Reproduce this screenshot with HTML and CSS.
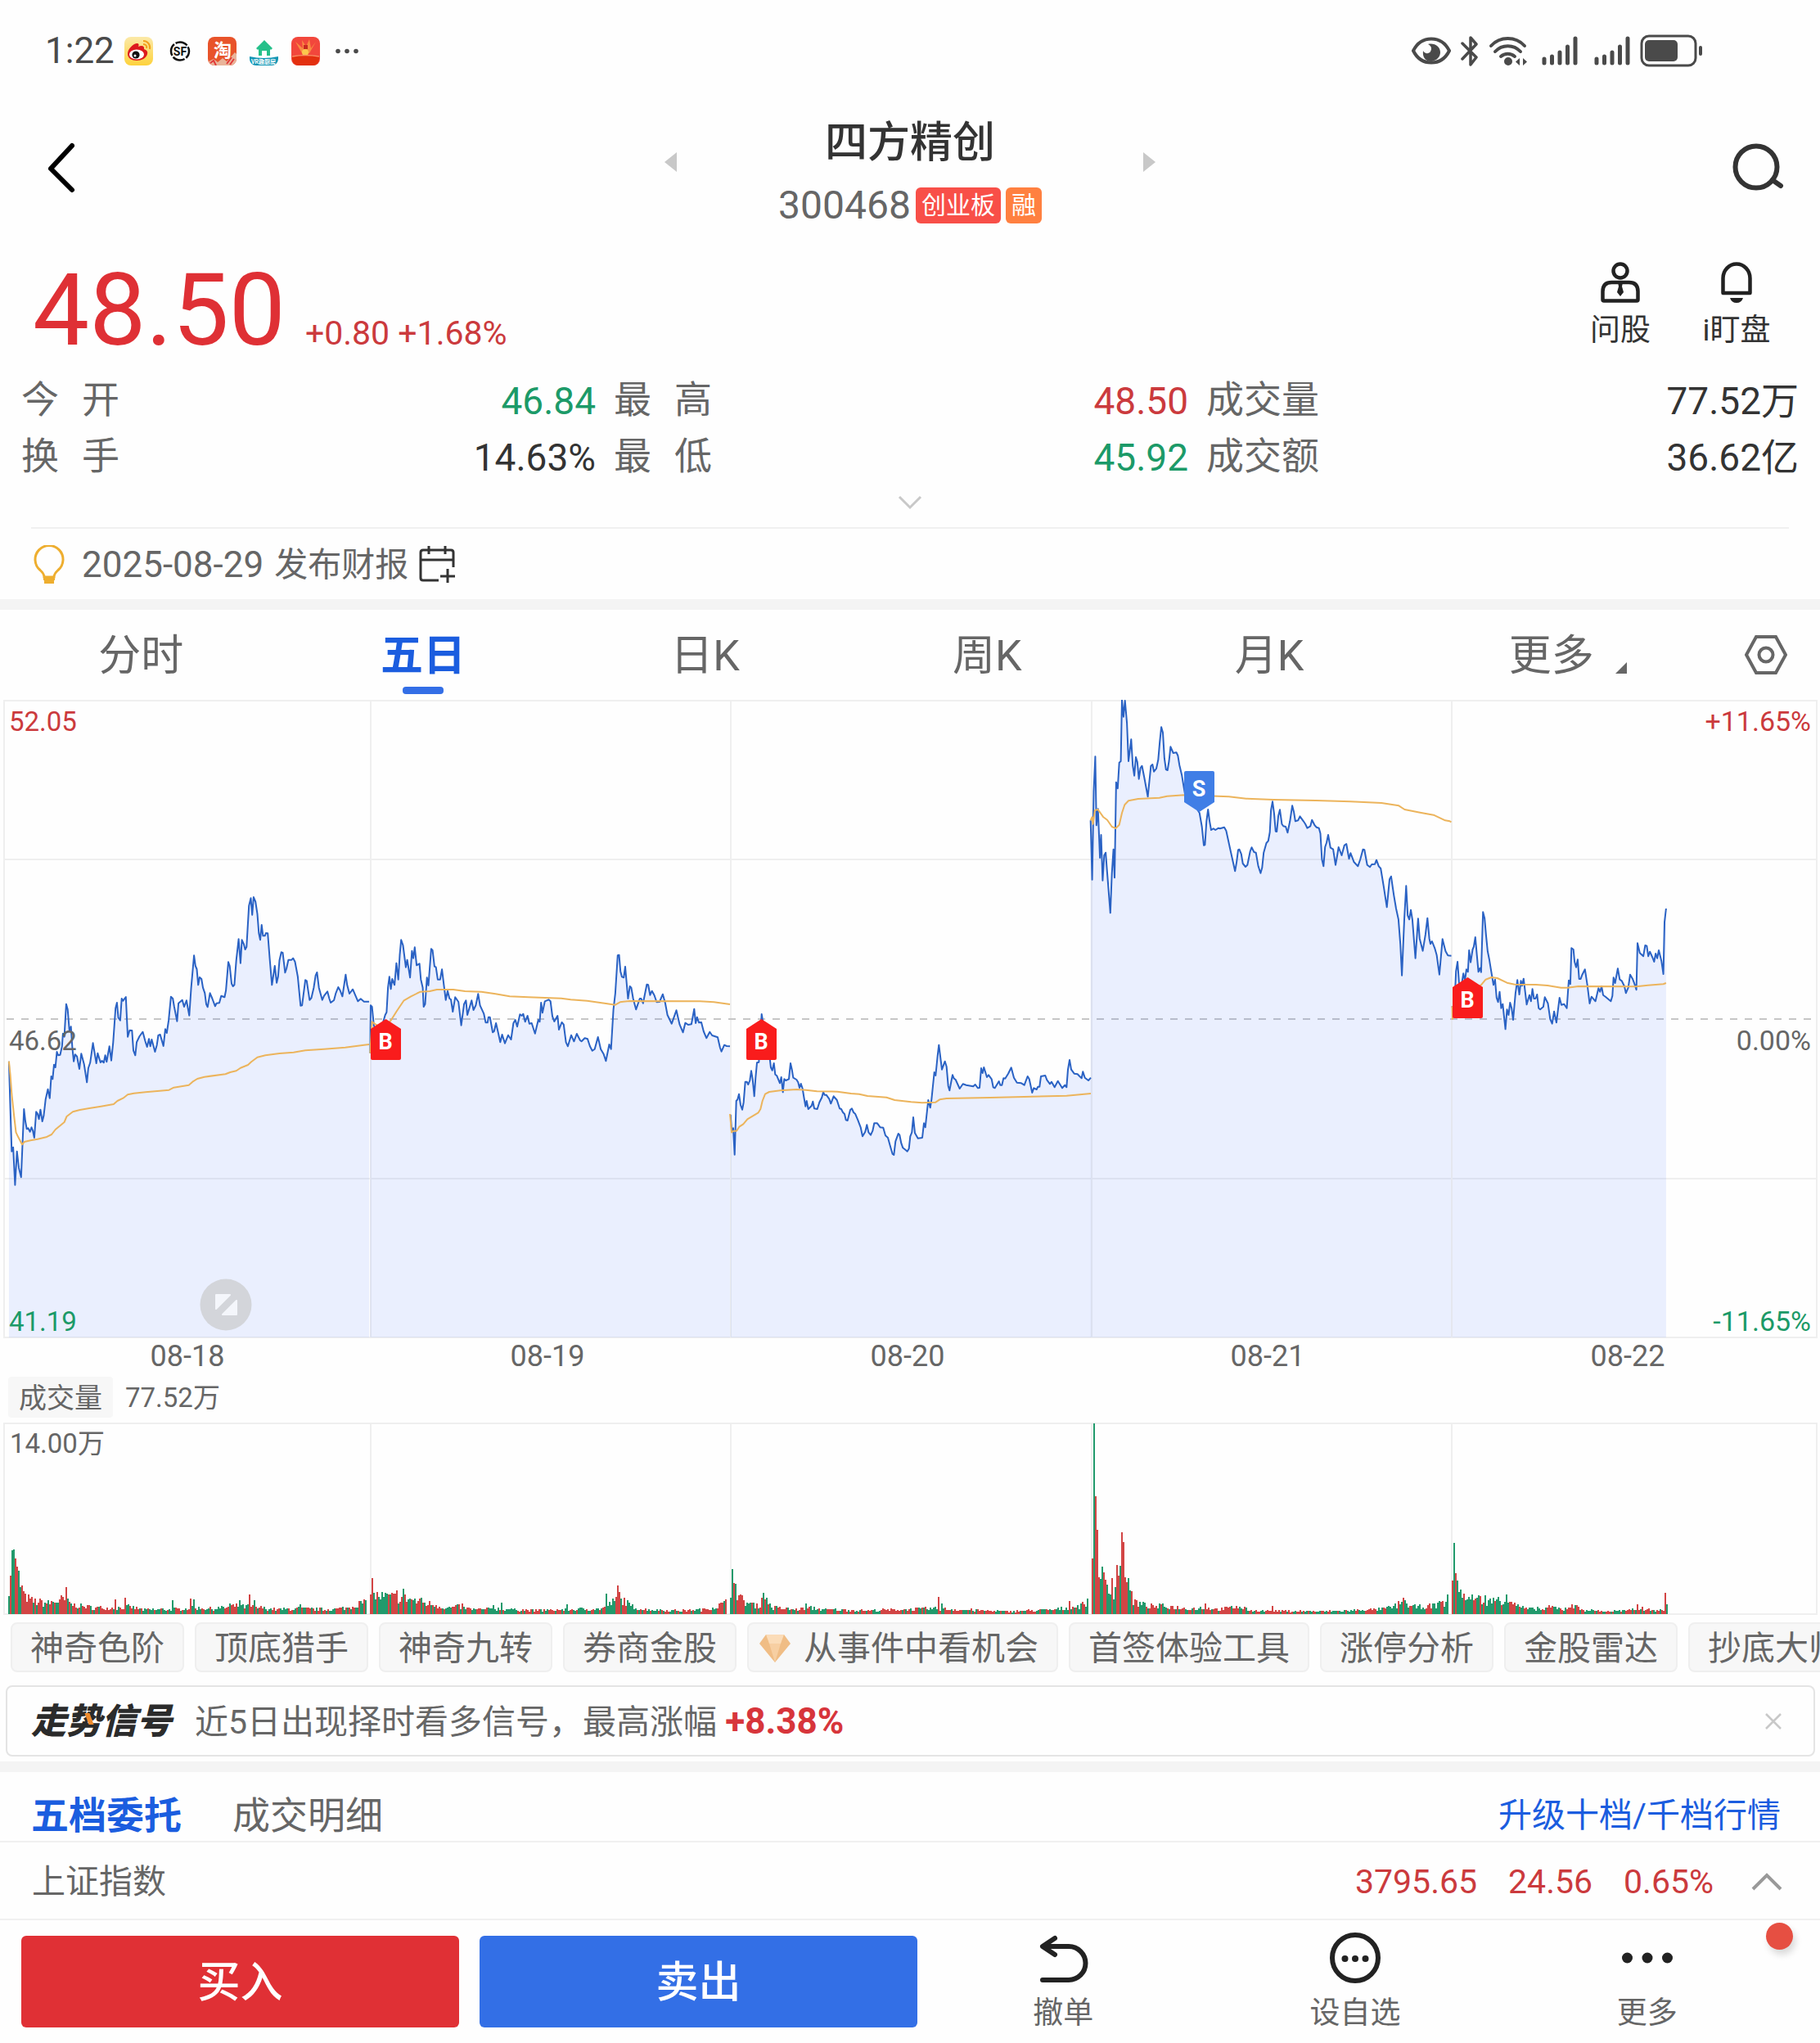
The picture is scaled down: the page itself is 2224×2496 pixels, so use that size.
FILE: index.html
```html
<!DOCTYPE html>
<html lang="zh-CN">
<head>
    <meta charset="UTF-8">
    <meta name="viewport" content="width=device-width, initial-scale=1.0">
    <title>四方精创 300468</title>
    <link rel="stylesheet" href="styles.css">
</head>
<body>

    <div class="statusbar">
        <span class="clock">1:22</span>
        <div class="apps">
            <svg width="35" height="35" viewBox="0 0 35 35">
                <defs><linearGradient id="wb" x1="0" y1="0" x2="0" y2="1"><stop offset="0" stop-color="#fbe9a8"/><stop offset="1" stop-color="#fdd23c"/></linearGradient></defs>
                <rect width="35" height="35" rx="8" fill="url(#wb)"/>
                <path d="M4 21C4 15 10 9 15 8c3 0 3 2 2 4 4-2 8-1 7 3 3 1 5 3 4 6-1 5-7 8-13 8S4 26 4 21z" fill="#dd1a1d"/>
                <ellipse cx="15" cy="21.500" rx="9" ry="6" fill="#fff"/>
                <circle cx="14" cy="22" r="4.600" fill="#111"/><circle cx="13" cy="23" r="1.500" fill="#fff"/>
                <path d="M23 5c5 0 9 4 8 10M23 9c3 0 5 2 4 5" fill="none" stroke="#f2a01c" stroke-width="2"/>
            </svg>
            <svg width="35" height="35" viewBox="0 0 35 35">
                <circle cx="17" cy="17.500" r="11" fill="none" stroke="#111" stroke-width="2.500" stroke-dasharray="15.300 2" stroke-dashoffset="6"/>
                <text x="17" y="22.500" class="sf">SF</text>
            </svg>
            <svg width="35" height="35" viewBox="0 0 35 35">
                <rect width="35" height="35" rx="8" fill="#e8532a"/>
                <text x="18" y="24" class="tao">淘</text>
                <path d="M1 30l6-3 5 4 6-5 5 4 10-11 2 2v6a8 8 0 0 1-8 8H8a8 8 0 0 1-7-5z" fill="#e9b49a"/>
                <path d="M3 32l4-3 3 6M23 33l6-8M27 34l5-7" stroke="#e23a3a" stroke-width="2" fill="none"/>
            </svg>
            <svg width="35" height="35" viewBox="0 0 35 35">
                <path d="M18 4l10 10-2 2-1-1v8h-4v-6h-6v6h-4v-8l-1 1-2-2z" fill="#25c08a"/>
                <path d="M0 24q17 4 35 0v3a8 8 0 0 1-8 8H8a8 8 0 0 1-8-8z" fill="#0f95b4"/>
                <text x="17" y="33" class="vr">VR趣厨房</text>
            </svg>
            <svg width="35" height="35" viewBox="0 0 35 35">
                <rect width="35" height="35" rx="8" fill="#f2473c"/>
                <path d="M5 6l8 14h9l8-14-6 8-2-11-4 9-5-8 1 10z" fill="#f98d43"/>
                <circle cx="17" cy="19" r="4" fill="#fbc74d"/><rect x="15" y="10" width="5" height="5" fill="#c92a20"/>
                <path d="M1 24q16-3 33 0v3a8 8 0 0 1-8 8H9a8 8 0 0 1-8-8z" fill="#e3300f"/>
                <path d="M1 24q16-3 33 0" stroke="#f98d63" stroke-width="1.500" fill="none"/>
            </svg>
            <svg width="35" height="35" viewBox="0 0 35 35" fill="#4a4a4a">
                <circle cx="6" cy="17.500" r="2.800"/><circle cx="17" cy="17.500" r="2.800"/><circle cx="28" cy="17.500" r="2.800"/>
            </svg>
        </div>
        <div class="system">
            <svg width="48" height="40" viewBox="0 0 48 40">
                <path d="M2 20C7 10 15 5.500 24 5.500S41 10 46 20C41 30 33 34.500 24 34.500S7 30 2 20z" fill="none" stroke="#4a4a4a" stroke-width="4"/>
                <path d="M20 12c8-2 15 3 15 10 0 5-4 10-11 11-7 0-11-5-10-13 2 4 7 4 9 1 2-4 1-7-3-9z" fill="#4a4a4a"/>
            </svg>
            <svg width="22" height="40" viewBox="0 0 22 40" fill="none" stroke="#4a4a4a" stroke-width="3.500" stroke-linejoin="round" stroke-linecap="round">
                <path d="M2 11l17 17-7 9V4l7 8L2 30"/>
            </svg>
            <svg width="48" height="40" viewBox="0 0 48 40" fill="none" stroke="#4a4a4a" stroke-width="4" stroke-linecap="round">
                <path d="M3 14a28 28 0 0 1 41 0M8 21a21 21 0 0 1 31 0M15 27a13 13 0 0 1 17 0"/>
                <circle cx="24" cy="33" r="3" fill="#4a4a4a"/>
                <path d="M38 29v9l-5-4.500zM42 29v9l5-4.500z" fill="#4a4a4a" stroke="none"/>
            </svg>
            <svg class="signal" width="44" height="40" viewBox="0 0 44 40" stroke="#4a4a4a" stroke-width="5" stroke-linecap="round">
                <path d="M3 30v5M12.500 27v8M22 22v13M31.500 15v20M41 5v30"/>
            </svg>
            <svg class="signal" width="44" height="40" viewBox="0 0 44 40" stroke="#4a4a4a" stroke-width="5" stroke-linecap="round">
                <path d="M3 30v5M12.500 27v8M22 22v13M31.500 15v20M41 5v30"/>
            </svg>
            <svg width="78" height="40" viewBox="0 0 78 40">
                <rect x="2" y="2" width="66" height="36" rx="9" fill="none" stroke="#4a4a4a" stroke-width="3"/>
                <rect x="6" y="7" width="40" height="26" rx="5" fill="#4a4a4a"/>
                <rect x="72" y="14" width="4" height="12" rx="2" fill="#4a4a4a"/>
            </svg>
        </div>
    </div>

    <header class="header">
        <button class="icon-btn back" aria-label="返回">
            <svg width="40" height="64" viewBox="0 0 40 64"><path d="M33 5L7 33l26 26" fill="none" stroke="#000" stroke-width="6" stroke-linecap="round" stroke-linejoin="round"/></svg>
        </button>
        <div class="stock">
            <button class="icon-btn" aria-label="上一只">
                <svg width="16" height="26" viewBox="0 0 16 26"><path d="M16 1v24L1 13z" fill="#c8c8c8"/></svg>
            </button>
            <div class="stock-name">
                <h1>四方精创</h1>
                <p>300468 <span class="tag">创业板</span><span class="tag tag-orange">融</span></p>
            </div>
            <button class="icon-btn" aria-label="下一只">
                <svg width="16" height="26" viewBox="0 0 16 26"><path d="M0 1v24l15-12z" fill="#c8c8c8"/></svg>
            </button>
        </div>
        <button class="icon-btn search" aria-label="搜索">
            <svg width="66" height="62" viewBox="0 0 66 62" fill="none" stroke="#333" stroke-width="6" stroke-linecap="round"><circle cx="30" cy="30" r="25.500"/><path d="M50 46l10 7"/></svg>
        </button>
    </header>

    <section class="quote">
        <div class="price">
            <strong>48.50</strong>
            <span>+0.80 +1.68%</span>
        </div>
        <div class="actions">
            <button>
                <svg width="50" height="50" viewBox="0 0 50 50" fill="none" stroke="#222" stroke-width="4.500">
                    <circle cx="25" cy="11" r="8.500"/>
                    <path d="M3.500 46V36q0-11 11-11h21q11 0 11 11v10q0 1.500-1.500 1.500H5q-1.500 0-1.500-1.500z"/>
                    <path d="M22 25h6l-1 5 2 7-4 5-4-5 2-7z" fill="#222" stroke="none"/>
                </svg>
                问股
            </button>
            <button>
                <svg width="50" height="50" viewBox="0 0 50 50" fill="none" stroke="#222" stroke-width="4.500">
                    <path d="M8.500 38V20a16.500 17.500 0 0 1 33 0v18z" stroke-linejoin="round"/>
                    <path d="M17 44h16q-2 6-8 6t-8-6z" fill="#222" stroke="none"/>
                </svg>
                i盯盘
            </button>
        </div>
    </section>

    <dl class="stats">
        <div><dt><span>今</span><span>开</span></dt><dd class="green">46.84</dd></div>
        <div><dt><span>最</span><span>高</span></dt><dd class="red">48.50</dd></div>
        <div><dt>成交量</dt><dd>77.52万</dd></div>
        <div><dt><span>换</span><span>手</span></dt><dd>14.63%</dd></div>
        <div><dt><span>最</span><span>低</span></dt><dd class="green">45.92</dd></div>
        <div><dt>成交额</dt><dd>36.62亿</dd></div>
    </dl>
    <button class="expand" aria-label="展开">
        <svg width="32" height="20" viewBox="0 0 32 20"><path d="M3 3l13 13L29 3" fill="none" stroke="#c8c8c8" stroke-width="3"/></svg>
    </button>

    <div class="notice">
        <svg width="42" height="48" viewBox="0 0 42 48" fill="none" stroke="#eeae2f" stroke-width="3">
            <path d="M16 39q0-4-5-8.500a17 17 0 1 1 22 0q-5 4.500-5 8.500z"/><path d="M15 41h14M16 45h12" stroke-width="4"/>
        </svg>
        <span class="notice-date">2025-08-29</span>
        <span>发布财报</span>
        <svg width="44" height="46" viewBox="0 0 44 46" fill="none" stroke="#333" stroke-width="3">
            <path d="M24 42H5q-3 0-3-3V8q0-3 3-3h34q3 0 3 3v18M2 17h40M12 0v10M32 0v10M35 28v17M26 37h18"/>
        </svg>
    </div>

    <nav class="tabs">
        <button>分时</button>
        <button class="active">五日</button>
        <button>日K</button>
        <button>周K</button>
        <button>月K</button>
        <button class="more">更多</button>
        <button class="settings" aria-label="设置">
            <svg width="52" height="50" viewBox="0 0 52 50" fill="none" stroke="#666" stroke-width="4"><path d="M14 3h24l12 22-12 22H14L2 25z"/><circle cx="26" cy="25" r="8.500"/></svg>
        </button>
    </nav>

    <svg class="chart" viewBox="0 0 2224 780">
        <g class="grid">
            <path d="M5 1H2220V779H5zM5 195H2220M5 585H2220M453 0V780M893 0V780M1334 0V780M1774 0V780"/>
        </g>
        <path class="dash" d="M8 390H2216"/>
        <g id="series"></g>
        <text x="11" y="38" class="red">52.05</text>
        <text x="11" y="428">46.62</text>
        <text x="11" y="771" class="green">41.19</text>
        <text x="2213" y="38" class="red end">+11.65%</text>
        <text x="2213" y="428" class="end">0.00%</text>
        <text x="2213" y="771" class="green end">-11.65%</text>
        <g id="markers"></g>
        <circle cx="276" cy="739" r="31.500" fill="#d3d5da"/>
        <path d="M264 727h17l-17 17zM289 751h-17l17-17z" fill="#f4f6fb" stroke="#f4f6fb" stroke-width="2" stroke-linejoin="round"/>
    </svg>
    <div class="dates"><span>08-18</span><span>08-19</span><span>08-20</span><span>08-21</span><span>08-22</span></div>

    <div class="volume-head"><button>成交量</button><span>77.52万</span></div>
    <svg class="chart" viewBox="0 0 2224 235">
        <path class="grid" d="M5 1H2220V234H5zM453 0V235M893 0V235M1334 0V235M1774 0V235"/>
        <path id="vol-red" class="bar-red"/>
        <path id="vol-green" class="bar-green"/>
        <text x="12" y="37">14.00万</text>
    </svg>

    <div class="chips">
        <button>神奇色阶</button>
        <button>顶底猎手</button>
        <button>神奇九转</button>
        <button>券商金股</button>
        <button class="gem">
            <svg width="38" height="34" viewBox="0 0 38 34">
                <path d="M8 0h22l8 11-19 23L0 11z" fill="#f0bd85"/><path d="M8 0h22l-4 11H12z" fill="#fbdcb8"/><path d="M12 11h14l-7 23z" fill="#f7cfa2"/>
            </svg>从事件中看机会
        </button>
        <button>首签体验工具</button>
        <button>涨停分析</button>
        <button>金股雷达</button>
        <button>抄底大师</button>
    </div>

    <div class="signal-card">
        <span class="signal-logo">走势信号</span>
        <p>近5日出现择时看多信号，最高涨幅 <b>+8.38%</b></p>
        <button class="icon-btn" aria-label="关闭">
            <svg width="20" height="20" viewBox="0 0 20 20"><path d="M1 1l18 18M19 1L1 19" stroke="#c8c8c8" stroke-width="2.500"/></svg>
        </button>
    </div>

    <div class="orders">
        <button class="active">五档委托</button>
        <button>成交明细</button>
        <a href="#">升级十档/千档行情</a>
    </div>

    <div class="index-row">
        <span class="index-name">上证指数</span>
        <span class="red">3795.65</span>
        <span class="red">24.56</span>
        <span class="red">0.65%</span>
        <button class="icon-btn" aria-label="收起">
            <svg width="38" height="22" viewBox="0 0 38 22"><path d="M2 20L19 3l17 17" fill="none" stroke="#999" stroke-width="4"/></svg>
        </button>
    </div>

    <footer class="bottom">
        <div class="trade">
            <button class="buy">买入</button>
            <button class="sell">卖出</button>
        </div>
        <div class="tools">
            <button>
                <svg width="62" height="62" viewBox="0 0 62 62" fill="none" stroke="#222" stroke-width="6" stroke-linecap="round" stroke-linejoin="round"><path d="M21 7L6 17l15 10M7 17h31a20 20 0 0 1 0 41H6"/></svg>
                撤单
            </button>
            <button>
                <svg width="62" height="62" viewBox="0 0 62 62"><circle cx="31" cy="31" r="28" fill="none" stroke="#222" stroke-width="6"/><g fill="#222"><circle cx="18.500" cy="32" r="4"/><circle cx="31" cy="32" r="4"/><circle cx="43.500" cy="32" r="4"/></g></svg>
                设自选
            </button>
            <button class="has-dot">
                <svg width="62" height="62" viewBox="0 0 62 62" fill="#222"><circle cx="6.500" cy="31" r="6.500"/><circle cx="31" cy="31" r="6.500"/><circle cx="55.500" cy="31" r="6.500"/></svg>
                更多
            </button>
        </div>
    </footer>

    <script src="script.js"></script>
</body>
</html>
```

FILE: styles.css
```css
* { box-sizing: border-box; }

body {
    margin: 0;
    background: #fefefe;
    color: #666;
    font-family: Roboto, "Noto Sans CJK SC", sans-serif;
    font-size: 41px;
    line-height: 44px;
    overflow-x: hidden;
}

h1, p, dl, dd { margin: 0; }
svg { display: block; flex: none; }

button {
    margin: 0;
    padding: 0;
    border: 0;
    background: none;
    color: inherit;
    font: inherit;
    white-space: nowrap;
}

.red { color: #cb3a3d; fill: #cb3a3d; }
.green { color: #1c9a68; fill: #1c9a68; }

/* status bar */
.statusbar {
    display: flex;
    align-items: center;
    height: 124px;
    padding: 0 142px 0 55px;
    color: #4a4a4a;
}
.clock { font-size: 44px; width: 97px; }
.apps { display: flex; gap: 16px; }
.system { display: flex; align-items: center; gap: 12px; margin-left: auto; }
.system .signal { margin-left: 5px; }
.system .signal + .signal { margin-left: 8px; }
.sf { font: bold 14px Roboto, sans-serif; text-anchor: middle; fill: #111; }
.tao { font: bold 22px "Noto Sans CJK SC", sans-serif; text-anchor: middle; fill: #fff; }
.vr { font: bold 7px "Noto Sans CJK SC", sans-serif; text-anchor: middle; fill: #fff; }

/* title */
.header {
    display: grid;
    grid-template-columns: 1fr auto 1fr;
    align-items: center;
    padding: 14px 42px 11px;
}
.back { justify-self: start; padding: 0 0 2px 13px; }
.search { justify-self: end; padding-bottom: 2px; }
.stock { display: flex; align-items: center; width: 602px; justify-content: space-between; }
.stock > .icon-btn { padding-bottom: 15px; }
.stock-name { text-align: center; }
.stock-name h1 { font-size: 52px; font-weight: 500; line-height: 74px; color: #333; }
.stock-name p { display: flex; justify-content: center; font-size: 48px; margin-top: 17px; }
.tag {
    margin-left: 6px;
    padding: 0 7px;
    border-radius: 6px;
    background: #f84f48;
    color: #fff;
    font-size: 30px;
}
.tag-orange { background: #ff8040; }

/* price */
.quote { display: flex; justify-content: space-between; padding: 36px 57px 0 40px; }
.price { display: flex; align-items: baseline; gap: 24px; height: 120px; }
.price strong { font-size: 123px; font-weight: 400; line-height: 118px; color: #df3035; }
.price span { font-size: 41px; color: #cb3a3d; }
.actions { display: flex; align-items: flex-start; gap: 52px; font-size: 37px; color: #333; }
.actions button { display: flex; flex-direction: column; align-items: center; gap: 12px; min-width: 90px; }

.stats {
    display: grid;
    grid-template-columns: repeat(3, 1fr);
    padding: 14px 26px 0;
    font-size: 46px;
    line-height: 69px;
}
.stats div { display: flex; justify-content: space-between; height: 69px; padding-right: 22px; }
.stats div:nth-child(3n) { padding-right: 0; }
.stats dt { display: flex; gap: 28px; }
.stats dd { padding-top: 2px; color: #333; }
.stats dd.red { color: #cb3a3d; }
.stats dd.green { color: #1c9a68; }

.expand { display: flex; width: 100%; height: 44px; align-items: center; justify-content: center; margin-bottom: 8px; }

.notice {
    display: flex;
    align-items: center;
    gap: 13px;
    height: 88px;
    margin: 0 38px;
    padding-top: 2px;
    border-top: 2px solid #f0f0f0;
}
.notice svg:first-child { margin-right: 7px; }
.notice-date { font-size: 44px; }

/* chart tabs */
.tabs {
    display: flex;
    height: 123px;
    border-top: 13px solid #f4f4f4;
    font-size: 52px;
}
.tabs button { position: relative; flex: 1; padding-top: 3px; }
.tabs .active { color: #1b5ddf; font-weight: 700; }
.tabs .active::after {
    content: "";
    position: absolute;
    bottom: 7px;
    left: 50%;
    width: 50px;
    height: 9px;
    margin-left: -25px;
    border-radius: 4px;
    background: #336ee6;
}
.tabs .more::after {
    content: "";
    position: absolute;
    right: 80px;
    bottom: 32px;
    border-left: 14px solid transparent;
    border-bottom: 14px solid #666;
}
.tabs .settings { flex: 0 0 156px; padding: 0 0 0 64px; }

.chart { width: 100%; height: auto; }
.chart text { font-size: 33px; fill: #666; }
.chart text.red { fill: #cb3a3d; }
.chart text.green { fill: #1c9a68; }
.chart .end { text-anchor: end; font-size: 34px; }
.grid { fill: none; stroke: #efefef; stroke-width: 2; }
.dash { fill: none; stroke: #c6c6c6; stroke-width: 2; stroke-dasharray: 9 9; }
.area { fill: #3c70ff; fill-opacity: 0.1; }
.line, .avg { fill: none; stroke: #2a62c4; stroke-width: 2; stroke-linejoin: round; vector-effect: non-scaling-stroke; }
.avg { stroke: #ecb45c; }
.chart .marker { font-size: 27px; font-weight: 700; fill: #fff; text-anchor: middle; }
.bar-red { fill: none; stroke: #d24545; stroke-width: 2; }
.bar-green { fill: none; stroke: #229a6c; stroke-width: 2; }

.dates { display: grid; grid-template-columns: repeat(5, 1fr); padding: 0 15px 0 9px; font-size: 36px; text-align: center; }

.volume-head { display: flex; align-items: center; gap: 15px; padding: 3px 10px 6px; font-size: 34px; }
.volume-head button { height: 50px; padding: 2px 13px 0; border-radius: 4px; background: #f7f7f7; }
.volume-head span { padding-top: 2px; font-size: 33px; }

/* tool chips */
.chips { display: flex; gap: 13px; padding: 9px 0 16px 13px; overflow: hidden; }
.chips button {
    flex: none;
    height: 61px;
    padding: 3px 22px 0;
    border: 2px solid #efefef;
    border-radius: 8px;
    background: #f7f7f7;
}
.chips .gem { display: flex; align-items: center; gap: 16px; padding-left: 13px; }

.signal-card {
    display: flex;
    align-items: center;
    height: 87px;
    margin: 0 6px 6px 7px;
    padding: 0 39px 0 29px;
    border: 2px solid #e4e4e4;
    border-radius: 8px;
}
.signal-logo {
    position: relative;
    margin-right: 28px;
    color: #2b2b2b;
    font-size: 43px;
    font-style: italic;
    font-weight: 900;
}
.signal-logo::after {
    content: "";
    position: absolute;
    left: 68px;
    top: 12px;
    width: 6px;
    height: 14px;
    background: #ee8a2c;
    transform: skewX(20deg);
}
.signal-card p { padding-top: 2px; }
.signal-card b { color: #d7353b; font-size: 44px; }
.signal-card .icon-btn { margin-left: auto; }

/* order book */
.orders {
    display: flex;
    align-items: center;
    gap: 62px;
    height: 99px;
    padding: 22px 48px 0 38px;
    border-top: 13px solid #f4f4f4;
    border-bottom: 2px solid #f0f0f0;
    font-size: 46px;
}
.orders .active { color: #1b5ddf; font-weight: 700; }
.orders a { margin-left: auto; color: #1b5ddf; font-size: 41px; text-decoration: none; }

.index-row {
    display: flex;
    align-items: center;
    gap: 38px;
    height: 95px;
    padding: 2px 46px 0 39px;
    border-bottom: 2px solid #f0f0f0;
}
.index-name { margin-right: auto; }
.index-row .icon-btn { margin-left: 8px; }

.bottom { display: flex; padding: 15px 33px 0 26px; }
.trade { display: flex; flex: 1; gap: 25px; padding-top: 4px; }
.trade button { flex: 1; height: 112px; padding-top: 3px; border-radius: 6px; color: #fff; font-size: 52px; font-weight: 500; }
.buy { background: #e03035; }
.sell { background: #336fe6; }
.tools { display: flex; flex: 0 0 1070px; font-size: 37px; }
.tools button { position: relative; flex: 1; display: flex; flex-direction: column; align-items: center; gap: 15px; }
.has-dot::after {
    content: "";
    position: absolute;
    top: -12px;
    right: 0;
    width: 33px;
    height: 33px;
    border-radius: 50%;
    background: #e64f42;
    box-shadow: 3px 6px 8px rgba(0, 0, 0, 0.15);
}
```

FILE: script.js
```js
// Each block: [offset x, offset y, step x, step y, price points, average points]
const days = [
    [0, 205, 900 / 1568, 1 / 3,
     "19,710 25,1040 28,1025 32,1163 36,1040 40,1100 45,1135 51,885 54,930 57,958 60,955 64,968 67,952 70,965 73,990 77,895 80,902 83,922 86,887 90,930 93,910 97,850 102,812 106,845 109,765 112,775 115,722 118,732 121,675 124,688 128,686 132,655 134,608 137,620 141,500 144,520 148,600 151,583 154,660 157,710 160,685 164,692 169,738 173,682 179,720 185,787 188,735 192,715 198,643 205,717 208,680 214,714 217,708 221,715 224,688 227,712 233,655 237,707 241,640 246,515 249,495 252,550 256,560 259,480 262,488 268,474 272,620 276,596 281,597 284,670 288,688 291,640 297,618 304,602 309,635 313,657 317,628 320,655 323,630 330,675 334,650 337,615 341,612 348,654 352,592 355,606 359,560 364,473 368,480 371,510 377,563 380,497 388,485 392,510 397,487 403,542 407,440 413,322 416,360 419,372 422,430 425,402 429,408 432,440 436,460 439,500 442,511 447,460 452,480 458,508 461,497 467,496 471,470 478,475 481,450 486,346 489,360 493,425 496,435 499,430 503,340 508,262 512,350 515,265 519,280 522,300 525,290 530,140 534,112 537,173 540,108 544,125 548,170 551,240 554,265 557,210 560,250 564,250 566,240 570,241 574,330 579,430 585,360 589,422 592,400 595,340 599,310 602,312 607,385 610,370 614,338 621,338 624,332 628,345 634,400 640,506 643,505 650,412 653,415 659,485 663,478 668,440 672,395 675,384 679,440 686,485 690,470 697,454 701,480 704,495 711,486 715,460 720,438 724,450 729,472 736,392 739,430 744,462 751,446 757,470 762,490 768,481 775,491 786,491",
     "19,710 22,760 25,830 30,910 34,970 38,985 47,1015 52,1005 65,1000 80,995 98,988 110,978 118,960 137,933 142,912 155,895 170,888 190,882 215,875 242,867 250,855 262,845 272,832 285,827 310,823 360,815 370,806 402,797 410,785 420,774 435,767 480,757 490,750 503,745 512,734 528,723 535,712 548,695 565,688 595,681 625,677 650,670 690,665 735,659 775,650 786,648"],
    [0, 205, 900 / 1568, 1 / 3,
     "788,680 789,505 792,510 796,580 805,600 815,570 820,540 823,530 826,440 829,400 832,445 835,408 840,430 844,350 848,410 851,320 854,265 858,285 864,365 867,338 873,403 877,305 880,332 883,292 887,358 893,352 896,410 900,440 902,510 905,500 909,403 912,432 918,298 921,303 925,362 928,365 932,410 937,410 941,373 945,430 949,485 953,452 957,480 960,483 964,528 969,475 976,492 982,578 988,500 992,487 995,540 1004,487 1008,522 1013,505 1018,463 1022,505 1030,535 1034,568 1038,568 1040,548 1043,548 1049,604 1052,600 1056,570 1060,600 1065,640 1069,612 1075,644 1082,614 1088,630 1093,570 1097,558 1101,583 1107,538 1111,543 1114,536 1118,565 1123,543 1127,572 1132,570 1139,608 1146,558 1149,565 1152,495 1155,532 1160,490 1168,484 1172,490 1176,545 1180,564 1187,543 1190,594 1196,567 1200,575 1205,640 1209,655 1216,614 1222,637 1228,609 1235,633 1238,637 1245,625 1251,628 1256,655 1261,671 1266,665 1273,621 1279,665 1285,683 1290,709 1297,648 1301,665 1306,520 1310,460 1315,322 1318,320 1321,380 1324,400 1328,403 1331,363 1337,480 1341,435 1344,440 1348,480 1354,520 1362,480 1365,480 1369,497 1377,428 1380,430 1384,467 1388,452 1393,468 1398,493 1404,492 1411,464 1416,495 1421,540 1430,572 1440,523 1447,575 1454,604 1459,569 1465,576 1472,574 1478,518 1481,570 1484,548 1488,568 1493,567 1498,600 1504,625 1511,602 1516,615 1528,622 1533,660 1536,674 1542,650 1547,654 1554,655",
     "788,680 792,565 800,575 815,590 832,560 845,525 860,487 875,472 895,455 915,453 930,447 965,447 990,453 1025,455 1055,463 1085,472 1125,475 1195,479 1215,484 1250,488 1290,498 1310,503 1320,493 1340,489 1490,490 1520,493 1554,501"],
    [860, 205, 1 / 3, 1 / 3,
     "98,905 103,970 108,955 113,1052 119,855 124,850 129,830 135,870 141,887 146,860 152,785 158,785 163,795 169,780 174,745 179,775 185,838 190,770 195,715 202,713 212,537 223,600 242,700 246,733 251,743 257,717 262,758 268,763 279,790 284,768 290,823 295,775 301,780 312,775 318,717 323,740 328,770 340,777 346,787 351,807 356,792 362,810 367,840 373,875 377,855 383,885 395,873 400,857 405,883 416,885 424,860 433,842 438,823 443,833 449,833 460,848 466,865 476,838 488,852 498,883 504,885 510,897 516,903 521,925 527,927 537,888 543,883 549,897 555,902 565,925 575,952 582,985 592,968 598,943 604,970 612,980 619,965 625,937 636,937 647,952 658,953 666,982 675,990 686,1030 692,1050 697,1053 703,1003 713,975 718,980 724,1010 730,1027 740,1035 746,1040 752,1030 757,985 763,970 768,915 774,973 785,992 801,990 807,937 812,952 823,852 830,880 835,850 845,750 850,762 857,690 862,650 873,740 884,710 890,730 896,800 901,817 907,785 912,760 917,773 923,777 938,810 950,793 962,797 988,802 995,795 1005,808 1011,807 1017,735 1022,753 1027,732 1038,768 1044,760 1055,775 1061,805 1067,808 1082,783 1087,797 1093,797 1099,772 1105,773 1116,755 1127,733 1137,770 1148,788 1164,790 1175,797 1187,765 1193,775 1204,825 1210,808 1220,813 1225,803 1231,803 1236,765 1252,762 1258,778 1269,793 1275,785 1286,805 1298,782 1314,808 1324,797 1330,805 1335,740 1341,705 1347,740 1358,755 1370,757 1378,765 1385,772 1390,748 1397,770 1410,780 1419,770",
     "96,903 102,970 110,965 120,965 130,950 145,940 160,922 180,910 200,898 208,885 215,855 225,830 240,822 280,817 340,813 375,815 415,820 490,821 540,828 570,830 600,837 670,842 700,852 760,859 800,862 850,860 865,850 890,846 1050,843 1330,836 1419,828"],
    [1320, -15, 740 / 1568, 1 / 3,
     "27,487 31,704 35,380 39,253 42,505 46,445 51,624 54,540 58,707 62,615 66,605 70,680 78,826 82,680 86,593 89,697 93,347 97,370 101,275 105,270 108,45 112,107 116,48 121,130 125,270 132,190 136,285 140,323 144,255 148,273 152,335 156,295 160,287 166,330 175,400 183,287 187,282 191,308 197,297 202,265 206,200 210,145 214,165 218,260 222,300 226,303 230,270 234,217 241,240 249,238 253,250 257,285 263,320 270,380 275,420 300,440 309,460 315,510 320,578 323,577 327,490 331,447 335,490 339,522 345,517 350,522 358,515 362,517 373,512 378,525 388,590 401,673 405,640 409,595 412,593 417,610 421,645 428,657 433,650 440,600 444,586 450,603 455,605 461,655 467,680 471,660 475,605 482,570 487,562 491,530 494,450 498,418 502,460 506,527 509,528 513,470 517,448 522,500 526,508 532,510 537,532 543,490 549,433 553,455 557,490 564,487 569,472 578,490 583,500 588,515 596,508 600,485 607,505 612,512 618,515 622,535 626,630 630,655 634,585 638,568 642,540 648,587 655,593 661,650 665,620 669,585 677,615 684,578 689,573 696,628 700,607 709,640 719,655 725,630 732,593 736,595 743,650 750,658 755,648 763,647 767,632 773,655 778,663 786,730 794,805 801,703 805,692 812,760 818,810 824,850 829,940 833,1055 839,850 844,727 848,835 852,850 856,815 860,850 868,992 875,847 879,920 887,965 894,905 899,845 904,920 907,940 911,930 918,955 923,980 930,1052 938,922 942,945 946,967 952,982 961,983",
     "27,487 31,475 33,500 38,450 46,447 60,475 70,485 82,510 92,516 101,503 108,460 115,430 125,415 150,408 205,404 225,398 270,394 385,400 430,407 500,411 610,414 700,418 780,423 825,433 840,447 880,458 915,467 945,487 957,490 961,493"],
    [1320, -15, 740 / 1568, 1 / 3,
     "963,1168 968,1200 973,1040 977,1005 981,1085 985,1110 992,1048 996,1075 1000,1033 1004,1042 1007,963 1011,1007 1016,960 1019,950 1023,915 1027,980 1031,1042 1035,1028 1038,1043 1043,823 1047,845 1051,910 1055,967 1059,995 1063,1030 1070,1090 1074,1070 1078,1137 1082,1153 1086,1115 1090,1175 1094,1160 1101,1252 1105,1180 1109,1200 1113,1155 1117,1175 1121,1218 1127,1120 1132,1072 1137,1125 1141,1075 1144,1093 1148,1067 1156,1162 1163,1127 1167,1150 1171,1105 1175,1140 1179,1140 1183,1125 1187,1175 1191,1180 1199,1170 1203,1135 1211,1157 1217,1215 1222,1232 1227,1187 1233,1228 1241,1137 1246,1163 1253,1160 1260,1175 1265,1073 1269,1087 1272,955 1277,960 1280,1005 1284,1025 1288,997 1292,1068 1296,1068 1300,1052 1307,1033 1313,1090 1319,1158 1324,1133 1334,1150 1342,1102 1346,1115 1350,1095 1354,1127 1360,1133 1374,1150 1378,1130 1381,1063 1385,1083 1392,1030 1397,1070 1402,1075 1409,1095 1413,1120 1419,1100 1424,1052 1430,1067 1435,1085 1440,1108 1443,937 1449,973 1458,985 1463,945 1467,947 1471,985 1475,968 1482,990 1486,1005 1490,975 1494,992 1498,963 1505,1003 1510,1050 1513,860 1517,810",
     "963,1168 964,1215 970,1180 1000,1120 1038,1090 1050,1070 1065,1062 1080,1065 1105,1082 1125,1088 1180,1089 1210,1092 1245,1100 1262,1100 1290,1095 1440,1096 1470,1091 1510,1087 1517,1083"]
];

function toPoints(day, text) {
    return text.split(" ").map(p => {
        const [x, y] = p.split(",").map(Number);
        return [(day[0] + x * day[2]).toFixed(1), (day[1] + y * day[3]).toFixed(1)];
    });
}

let areas = "", lines = "";
days.forEach(day => {
    const price = toPoints(day, day[4]);
    const avg = toPoints(day, day[5]);
    const last = price[price.length - 1];
    areas += `<polygon class="area" points="${price[0][0]},779 ${price.join(" ")} ${last[0]},779"/>`;
    lines += `<polyline class="line" points="${price.join(" ")}"/><polyline class="avg" points="${avg.join(" ")}"/>`;
});
document.getElementById("series").innerHTML = areas + lines;

// Buy / sell flags: x, y, letter
const flags = [[453, 390, "B"], [912, 390, "B"], [1775, 339, "B"], [1447, 87, "S"]];
document.getElementById("markers").innerHTML = flags.map(([x, y, t]) => {
    const shape = t === "B"
        ? "M0 12L18.500 0L37 12V48q0 2-2 2H2q-2 0-2-2z"
        : "M2 0H35q2 0 2 2V38L18.500 50L0 38V2q0-2 2-2z";
    const color = t === "B" ? "#f91c1c" : "#407ee6";
    return `<g transform="translate(${x} ${y})"><path d="${shape}" fill="${color}"/><text class="marker" x="18" y="${t === "B" ? 37 : 31}">${t}</text></g>`;
}).join("");

// Volume: usual level (x:height) and single bars that stand out (x:height + r/g)
const level = "10:22 13:50 16:60 20:50 24:36 30:20 40:14 60:12 75:16 90:10 115:7 140:7 160:8 175:5 205:5 240:7 260:6 290:9 320:7 340:5 365:6 400:5 425:7 440:12 448:14 449:0 451:0 452:20 460:20 475:19 500:17 512:13 530:11 545:7 560:8 580:5 610:6 650:4 700:5 735:6 750:14 762:16 770:9 785:5 830:4 860:5 875:8 888:13 889:0 892:0 893:20 897:36 903:18 912:13 925:9 936:15 945:7 975:5 985:7 1010:5 1060:4 1100:5 1140:6 1170:5 1230:3 1290:5 1320:9 1330:13 1331:0 1333:0 1334:60 1337:120 1341:75 1346:42 1352:30 1357:22 1364:28 1370:60 1374:60 1379:30 1384:15 1390:12 1410:8 1420:9 1450:6 1475:7 1490:5 1512:8 1530:4 1620:3 1680:5 1700:7 1715:13 1725:8 1740:8 1755:10 1769:13 1770:0 1773:0 1774:50 1779:48 1783:24 1792:17 1805:17 1818:14 1845:16 1852:10 1865:6 1885:5 1896:8 1910:5 1921:9 1935:5 1960:3 1990:4 2005:7 2015:5 2034:4 2037:12 2038:0"
    .split(" ").map(p => p.split(":").map(Number));
const peaks = "15:78g 18:79g 31:25r 81:33r 141:18r 154:20r 211:17g 233:19r 238:18g 281:13g 294:17g 306:24r 312:17g 367:12g 447:17g 455:44r 485:29r 493:31g 515:20g 566:13r 603:11g 613:14g 694:12g 741:25g 756:35r 758:27r 895:55g 897:38r 932:20r 934:26g 936:18r 985:13g 1148:21r 1152:13g 1308:16r 1325:12r 1337:233g 1339:144r 1341:103r 1360:44r 1365:60r 1371:100r 1373:88r 1384:28r 1421:13g 1474:13r 1512:10r 1556:10r 1716:20r 1762:15r 1769:24g 1777:87g 1779:50r 1786:30g 1799:24g 1804:19r 1815:23g 1831:21g 1841:24g 1880:9g 1921:12r 2002:12r 2036:26r"
    .split(" ").map(p => [parseInt(p), parseInt(p.split(":")[1]), p.slice(-1)]);

let seed = 7;
function rand() {
    seed = (seed * 16807) % 2147483647;
    return seed / 2147483647;
}

const bars = { r: "", g: "" };
let side = "g";
for (let x = 11; x < 2038; x += 2) {
    const n = level.findIndex(p => p[0] > x);
    const [a, b] = [level[Math.max(n - 1, 0)], level[n]];
    if (a[1] === 0) continue;
    let h = (a[1] + (b[1] - a[1]) * (x - a[0]) / (b[0] - a[0])) * (0.7 + rand() * 0.8);
    if (rand() < 0.45) side = side === "g" ? "r" : "g";
    let c = side;
    const peak = peaks.find(p => p[0] === x || p[0] === x + 1);
    if (peak) [h, c] = [peak[1], peak[2]];
    bars[c] += `M${x} 234V${(234 - Math.max(h, 2)).toFixed(0)}`;
}
document.getElementById("vol-red").setAttribute("d", bars.r);
document.getElementById("vol-green").setAttribute("d", bars.g);
```
